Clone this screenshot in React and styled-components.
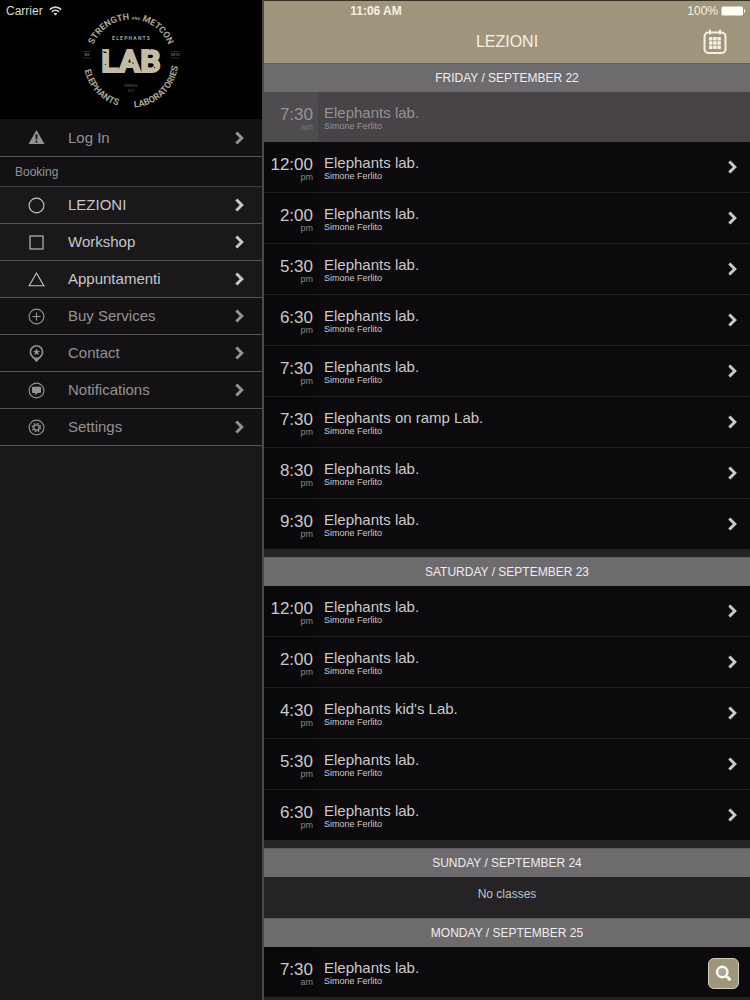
import React from 'react';
import styled, { createGlobalStyle, ThemeProvider } from 'styled-components';

const theme = {
  colors: {
    header: '#9f957d',
    headerText: '#f6f0e2',
    sidebar: '#1a181b',
    sidebarRow: '#131114',
    sidebarLine: '#565457',
    divider: '#4c4a4d',
    muted: '#949295',
    active: '#c8c6c9',
    list: '#252326',
    row: '#0d0a0d',
    rowTime: '#09080b',
    rowLine: '#221f22',
    past: '#474347',
    pastTime: '#4f4c50',
    dayHeader: '#6e6b6f',
    logo: '#c2bba6',
  },
};

const GlobalStyle = createGlobalStyle`
  *, *:before, *:after {
    box-sizing: border-box;
  }

  body {
    margin: 0;
    background: #1a181b;
    font-family: "Liberation Sans", Arial, Helvetica, sans-serif;
  }

  h1, h2, p, ul {
    margin: 0;
    padding: 0;
  }
`;

const Page = styled.div`
  position: relative;
  display: grid;
  grid-template-columns: 264px 1fr;
  height: 100vh;
  overflow: hidden;
`;

const StatusBar = styled.div`
  position: absolute;
  top: 2px;
  left: 0;
  right: 0;
  z-index: 2;
  display: grid;
  grid-template-columns: 1fr auto 1fr;
  align-items: center;
  height: 18px;
  padding: 0 4px 0 6px;
  font-size: 12px;
  line-height: 18px;
  color: ${props => props.theme.colors.headerText};
`;

const StatusGroup = styled.div`
  display: flex;
  align-items: center;
  justify-content: ${props => (props.$end ? 'flex-end' : 'flex-start')};
  gap: ${props => (props.$end ? '3px' : '6px')};
  color: ${props => (props.$end ? 'inherit' : '#d6d6d6')};
`;

const Clock = styled.time`
  font-weight: bold;
`;

const Sidebar = styled.aside`
  background: ${props => props.theme.colors.sidebar};
  border-right: 2px solid ${props => props.theme.colors.divider};
`;

const LogoPanel = styled.div`
  display: flex;
  justify-content: center;
  height: 119px;
  background: #010101;

  svg {
    display: block;
  }
`;

const MenuList = styled.ul`
  list-style-type: none;
`;

const MenuLink = styled.a`
  display: grid;
  grid-template-columns: 44px 1fr 9px;
  align-items: center;
  column-gap: 10px;
  height: ${props => (props.$tall ? '38px' : '37px')};
  padding: 0 18px 0 14px;
  border-bottom: 1px solid ${props => props.theme.colors.sidebarLine};
  background: ${props => (props.$active ? props.theme.colors.sidebar : props.theme.colors.sidebarRow)};
  color: ${props => (props.$active ? props.theme.colors.active : props.theme.colors.muted)};
  font-size: 15px;
  line-height: 18px;
  text-decoration: none;
`;

const MenuIcon = styled.span`
  display: flex;
  justify-content: center;
`;

const MenuHeading = styled.h2`
  height: 30px;
  padding-left: 15px;
  border-bottom: 1px solid #3c3a3d;
  background: ${props => props.theme.colors.sidebarRow};
  color: ${props => props.theme.colors.muted};
  font-size: 12px;
  font-weight: normal;
  line-height: 30px;
`;

const Main = styled.main`
  min-width: 0;
  background: ${props => props.theme.colors.list};
`;

const Header = styled.header`
  display: grid;
  grid-template-columns: 1fr auto 1fr;
  align-items: center;
  height: 63px;
  padding: 19px 23px 0;
  border-top: 1px solid #3a3026;
  background: ${props => props.theme.colors.header};
`;

const HeaderTitle = styled.h1`
  grid-column: 2;
  color: ${props => props.theme.colors.headerText};
  font-size: 16px;
  font-weight: normal;
  line-height: 20px;
`;

const CalendarButton = styled.button`
  justify-self: end;
  display: flex;
  padding: 0;
  border: 0;
  background: none;
  color: ${props => props.theme.colors.headerText};
`;

const Day = styled.section`
  margin-bottom: ${props => (props.$empty ? '0' : '8px')};
`;

const DayHeading = styled.h2`
  height: 29px;
  border-top: 1px solid #5f5c60;
  background: ${props => props.theme.colors.dayHeader};
  color: #efedf0;
  font-size: 12px;
  font-weight: normal;
  line-height: 28px;
  text-align: center;
`;

const ClassList = styled.ul`
  list-style-type: none;
`;

const ClassItem = styled.li`
  border-top: ${props => (props.$line ? '1px' : '0')} solid ${props => props.theme.colors.rowLine};
`;

const ClassLink = styled.a`
  display: grid;
  grid-template-columns: 54px 1fr 9px;
  height: 50px;
  padding-right: 13px;
  background: ${props => (props.$past ? props.theme.colors.past : props.theme.colors.row)};
  color: ${props => (props.$past ? '#959296' : '#cbc9cc')};
  text-decoration: none;

  > svg {
    align-self: center;
  }
`;

const ClassTime = styled.div`
  padding: 16px 5px 0 0;
  background: ${props => (props.$past ? props.theme.colors.pastTime : props.theme.colors.rowTime)};
  font-size: 17px;
  line-height: 14px;
  text-align: right;
`;

const Meridiem = styled.div`
  color: ${props => (props.$past ? '#767377' : '#89878a')};
  font-size: 9px;
  line-height: 10px;
`;

const ClassInfo = styled.div`
  padding: 12px 0 0 6px;
`;

const ClassName = styled.div`
  font-size: 15px;
  line-height: 17px;
`;

const Teacher = styled.div`
  font-size: 9px;
  line-height: 10px;
`;

const NoClasses = styled.p`
  height: 41px;
  padding-top: 8px;
  color: #c3c1c4;
  font-size: 12px;
  line-height: 18px;
  text-align: center;
`;

const SearchButton = styled.button`
  position: absolute;
  right: 11px;
  bottom: 11px;
  display: flex;
  align-items: center;
  justify-content: center;
  width: 31px;
  height: 31px;
  padding: 0;
  border: 1px solid #d3cdbd;
  border-radius: 6px;
  background: ${props => props.theme.colors.header};
  color: #fbf8f0;
`;

const Chevron = () => (
  <svg width="9" height="14" viewBox="0 0 9 14" fill="none" stroke="currentColor" strokeWidth="3" aria-hidden="true">
    <path d="M1.3 1.5 L6.8 7 L1.3 12.5" />
  </svg>
);

const Wifi = () => (
  <svg width="13" height="10" viewBox="0 0 13 10" fill="none" stroke="currentColor" strokeWidth="1.7" aria-hidden="true">
    <path d="M0.8 3.6 C4 0.4 9 0.4 12.2 3.6" />
    <path d="M2.9 5.8 C5 3.8 8 3.8 10.1 5.8" />
    <path d="M6.5 9.6 L4.6 7.6 C5.7 6.6 7.3 6.6 8.4 7.6 Z" fill="currentColor" stroke="none" />
  </svg>
);

const Battery = () => (
  <svg width="25" height="10" viewBox="0 0 25 10" fill="#fffdf6" aria-hidden="true">
    <rect x="0.5" y="0.5" width="21.5" height="9" rx="1.5" />
    <path d="M23 3.2 C24.6 3.5 24.6 6.5 23 6.8 Z" />
  </svg>
);

const Calendar = () => (
  <svg width="24" height="26" viewBox="0 0 24 26" aria-hidden="true">
    <rect x="1.5" y="3.5" width="21" height="20.5" rx="4" fill="none" stroke="currentColor" strokeWidth="2" />
    <path d="M7 0.8 V5.5 M17 0.8 V5.5" stroke="currentColor" strokeWidth="2" />
    {[8, 12.2, 16.4].map(y =>
      [6, 10.2, 14.4].map(x => (
        <rect key={`${x}-${y}`} x={x} y={y} width="3.5" height="3.5" rx="0.5" fill="currentColor" />
      ))
    )}
  </svg>
);

const Search = () => (
  <svg width="17" height="17" viewBox="0 0 16 16" fill="none" stroke="currentColor" aria-hidden="true">
    <circle cx="6.8" cy="6.6" r="4.9" strokeWidth="2.3" fill="#aaa6a6" />
    <path d="M10.4 10.2 L14.6 14.4" strokeWidth="2.8" />
  </svg>
);

const iconShapes = {
  warning: (
    <path
      fill="currentColor"
      stroke="none"
      fillRule="evenodd"
      d="M8.5 1 L16.5 15 H0.5 Z M7.4 5.4 L7.8 10.6 H9.2 L9.6 5.4 Z M7.6 11.7 V13.5 H9.4 V11.7 Z"
    />
  ),
  circle: <circle cx="8.5" cy="8.5" r="7.4" />,
  square: <rect x="2" y="2" width="13" height="13" />,
  triangle: <path d="M8.5 2 L15.8 14.8 H1.2 Z" />,
  plus: (
    <>
      <circle cx="8.5" cy="8.5" r="7.4" />
      <path d="M8.5 4.5 V12.5 M4.5 8.5 H12.5" />
    </>
  ),
  pin: (
    <>
      <path d="M8.5 16 C7.4 13.6 2.4 11.4 2.4 6.9 A6.1 6.1 0 0 1 14.6 6.9 C14.6 11.4 9.6 13.6 8.5 16 Z" strokeWidth="1.6" />
      <path d="M5.6 12.6 L8.5 17 L11.4 12.6 Z" fill="currentColor" stroke="none" />
      <path
        d="M8.5 3.4 L9.5 5.7 L12 5.9 L10.1 7.5 L10.7 10 L8.5 8.7 L6.3 10 L6.9 7.5 L5 5.9 L7.5 5.7 Z"
        fill="currentColor"
        stroke="none"
      />
    </>
  ),
  message: (
    <>
      <circle cx="8.5" cy="8.5" r="7.4" />
      <path
        d="M5 4.8 H12 Q13 4.8 13 5.8 V10 Q13 11 12 11 H9.8 L7.2 13.2 V11 H5 Q4 11 4 10 V5.8 Q4 4.8 5 4.8 Z"
        fill="currentColor"
        stroke="none"
      />
    </>
  ),
  settings: (
    <>
      <circle cx="8.5" cy="8.5" r="7.4" />
      <circle cx="8.5" cy="8.5" r="2.7" strokeWidth="1.3" />
      <circle cx="8.5" cy="8.5" r="4" strokeWidth="1.5" strokeDasharray="1.6 1.54" />
    </>
  ),
};

const Icon = ({ name }) => (
  <svg width="17" height="17" viewBox="0 0 17 17" fill="none" stroke="currentColor" strokeWidth="1.1" aria-hidden="true">
    {iconShapes[name]}
  </svg>
);

const RingText = styled.text`
  fill: #a9a495;
  font-family: Roboto, "Liberation Sans", sans-serif;
  font-size: ${props => props.$size}px;
  font-weight: bold;
  text-anchor: middle;
`;

const LabText = styled.text`
  fill: ${props => props.theme.colors.logo};
  stroke: ${props => props.theme.colors.logo};
  stroke-width: 2px;
  font-family: Roboto, "Liberation Sans", sans-serif;
  font-size: 32px;
  font-weight: bold;
  text-anchor: middle;
`;

const Logo = () => (
  <svg width="110" height="119" viewBox="77 0 110 119" role="img" aria-label="Elephants Lab">
    <defs>
      <path id="ring-top" d="M91.5 60 A40.5 40.5 0 0 1 172.5 60" />
      <path id="ring-bottom" d="M84.5 60 A47.5 47.5 0 0 0 179.5 60" />
    </defs>
    <RingText $size={9}>
      <textPath href="#ring-top" startOffset="50%">
        STRENGTH <tspan fontSize="4">AND</tspan> METCON
      </textPath>
    </RingText>
    <RingText $size={9}>
      <textPath href="#ring-bottom" startOffset="24%">ELEPHANTS</textPath>
    </RingText>
    <RingText $size={9}>
      <textPath href="#ring-bottom" startOffset="74%">LABORATORIES</textPath>
    </RingText>
    <RingText $size={5} x="132" y="40">E L E P H A N T S</RingText>
    <LabText x="132" y="72">LAB</LabText>
    <g fill="#010101">
      <path d="M104 51 l3 1 l1 1 l-3 0 Z M133 62 l2 1 l-1 1 Z M149 48 l2 2 l2 -2 Z" />
      <path d="M106 64 h1 v1 h-1 Z M155 67 h1 v1 h-1 Z" />
    </g>
    <g stroke="#4d4a43" strokeWidth="0.6">
      <path d="M84 51.5 H92 M84 58 H92 M172 51.5 H180 M172 58 H180" />
    </g>
    <g opacity="0.6">
      <RingText $size={4} x="88" y="56">BE</RingText>
      <RingText $size={4} x="176" y="56">2015</RingText>
    </g>
    <g opacity="0.4">
      <RingText $size={3} x="132" y="87">FERRARA</RingText>
      <RingText $size={3} x="132" y="92">2017</RingText>
    </g>
  </svg>
);

const bookingItems = [
  { label: 'LEZIONI', icon: 'circle', active: true },
  { label: 'Workshop', icon: 'square', active: true },
  { label: 'Appuntamenti', icon: 'triangle', active: true },
  { label: 'Buy Services', icon: 'plus' },
  { label: 'Contact', icon: 'pin' },
  { label: 'Notifications', icon: 'message' },
  { label: 'Settings', icon: 'settings' },
];

const lab = (time, half = 'pm', name = 'Elephants lab.', past = false) => ({ time, half, name, past });

const days = [
  {
    title: 'FRIDAY / SEPTEMBER 22',
    classes: [
      lab('7:30', 'am', 'Elephants lab.', true),
      lab('12:00'),
      lab('2:00'),
      lab('5:30'),
      lab('6:30'),
      lab('7:30'),
      lab('7:30', 'pm', 'Elephants on ramp Lab.'),
      lab('8:30'),
      lab('9:30'),
    ],
  },
  {
    title: 'SATURDAY / SEPTEMBER 23',
    classes: [
      lab('12:00'),
      lab('2:00'),
      lab('4:30', 'pm', "Elephants kid's Lab."),
      lab('5:30'),
      lab('6:30'),
    ],
  },
  { title: 'SUNDAY / SEPTEMBER 24', classes: [] },
  { title: 'MONDAY / SEPTEMBER 25', classes: [lab('7:30', 'am')] },
];

const MenuItem = ({ label, icon, active, tall }) => (
  <li>
    <MenuLink href="#" $active={active} $tall={tall}>
      <MenuIcon><Icon name={icon} /></MenuIcon>
      <span>{label}</span>
      <Chevron />
    </MenuLink>
  </li>
);

const ClassRow = ({ time, half, name, past, line }) => (
  <ClassItem $line={line}>
    <ClassLink href="#" $past={past}>
      <ClassTime $past={past}>
        {time}
        <Meridiem $past={past}>{half}</Meridiem>
      </ClassTime>
      <ClassInfo>
        <ClassName>{name}</ClassName>
        <Teacher>Simone Ferlito</Teacher>
      </ClassInfo>
      {!past && <Chevron />}
    </ClassLink>
  </ClassItem>
);

const App = () => {
  return (
    <ThemeProvider theme={theme}>
      <GlobalStyle />
      <Page>
        <StatusBar>
          <StatusGroup>Carrier <Wifi /></StatusGroup>
          <Clock>11:06 AM</Clock>
          <StatusGroup $end>100% <Battery /></StatusGroup>
        </StatusBar>

        <Sidebar>
          <LogoPanel><Logo /></LogoPanel>
          <nav>
            <MenuList>
              <MenuItem label="Log In" icon="warning" tall />
            </MenuList>
            <MenuHeading>Booking</MenuHeading>
            <MenuList>
              {bookingItems.map(item => <MenuItem key={item.label} {...item} />)}
            </MenuList>
          </nav>
        </Sidebar>

        <Main>
          <Header>
            <HeaderTitle>LEZIONI</HeaderTitle>
            <CalendarButton type="button" aria-label="Calendar"><Calendar /></CalendarButton>
          </Header>

          {days.map(day => (
            <Day key={day.title} $empty={day.classes.length === 0}>
              <DayHeading>{day.title}</DayHeading>
              {day.classes.length > 0 ? (
                <ClassList>
                  {/* no line under a class that is already over */}
                  {day.classes.map((item, i) => (
                    <ClassRow key={i} {...item} line={i > 0 && !day.classes[i - 1].past} />
                  ))}
                </ClassList>
              ) : (
                <NoClasses>No classes</NoClasses>
              )}
            </Day>
          ))}
        </Main>

        <SearchButton type="button" aria-label="Search"><Search /></SearchButton>
      </Page>
    </ThemeProvider>
  );
};

export default App;
